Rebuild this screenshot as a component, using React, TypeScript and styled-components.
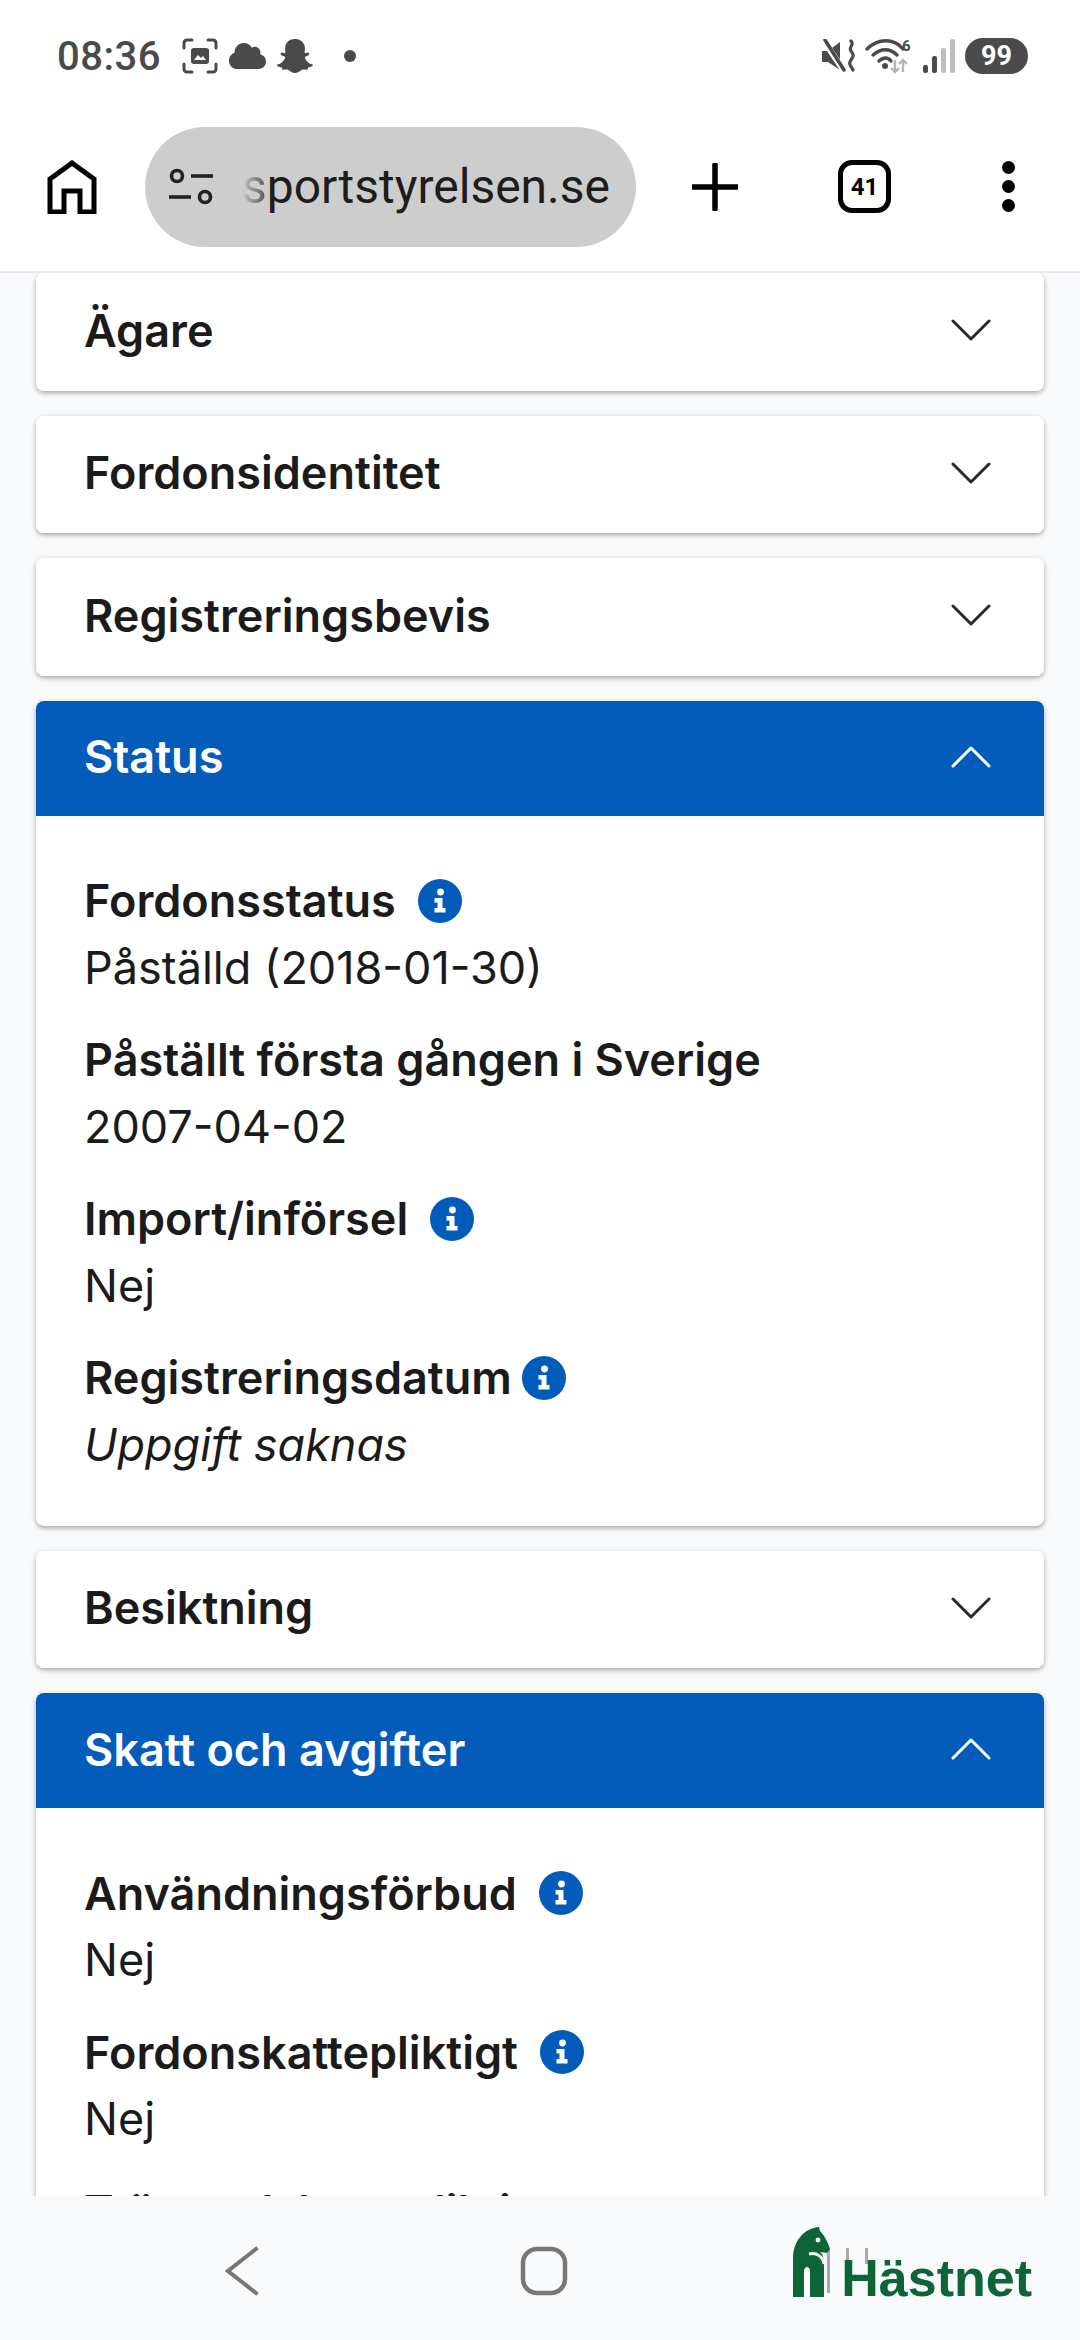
import { FaCloud, FaSnapchatGhost } from "react-icons/fa";
import styled, { createGlobalStyle } from "styled-components";

const GlobalStyle = createGlobalStyle`
    html, body {
        margin: 0;
        padding: 0;
        background: #f9fafc;
    }
    #root {
        width: 1080px;
        height: 2340px;
    }
`;

interface FieldData {
    label: string;
    value: string;
    info?: boolean;
    tight?: boolean;
    missing?: boolean;
}

const statusFields: FieldData[] = [
    { label: "Fordonsstatus", value: "Påställd (2018-01-30)", info: true },
    { label: "Påställt första gången i Sverige", value: "2007-04-02" },
    { label: "Import/införsel", value: "Nej", info: true },
    { label: "Registreringsdatum", value: "Uppgift saknas", info: true, tight: true, missing: true },
];

const taxFields: FieldData[] = [
    { label: "Användningsförbud", value: "Nej", info: true },
    { label: "Fordonskattepliktigt", value: "Nej", info: true },
    { label: "Trängselskattepliktigt", value: "Nej" },
];

const Chevron = ({ up }: { up?: boolean }) => (
    <svg width="40" height="22" viewBox="0 0 40 22" fill="none">
        <path
            d={up ? "M2 20 L20 2 L38 20" : "M2 2 L20 20 L38 2"}
            stroke="currentColor"
            strokeWidth="3"
            strokeLinecap="round"
            strokeLinejoin="round"
        />
    </svg>
);

const InfoIcon = () => (
    <svg width="44" height="44" viewBox="0 0 44 44">
        <circle cx="22" cy="22" r="22" fill="#035cba" />
        <circle cx="22.5" cy="13" r="3.4" fill="#fff" />
        <path d="M16.5 19h8v10h3v4.5h-11V29h3v-5.5h-3z" fill="#fff" />
    </svg>
);

const Section = ({ title, fields }: { title: string; fields?: FieldData[] }) => (
    <Card>
        <CardHeader $open={!!fields}>
            <CardTitle>{title}</CardTitle>
            <Chevron up={!!fields} />
        </CardHeader>
        {fields && (
            <CardBody>
                {fields.map((field) => (
                    <Field key={field.label}>
                        <FieldLabel>
                            {field.label}
                            {field.info && (
                                <InfoSlot $tight={field.tight}>
                                    <InfoIcon />
                                </InfoSlot>
                            )}
                        </FieldLabel>
                        <FieldValue $missing={field.missing}>{field.value}</FieldValue>
                    </Field>
                ))}
            </CardBody>
        )}
    </Card>
);

const App = () => (
    <Screen>
        <GlobalStyle />
        <TopArea>
            <StatusBar>
                <StatusGroup>
                    <Clock>08:36</Clock>
                    <svg width="36" height="36" viewBox="0 0 36 36" fill="none">
                        <path
                            d="M2 10V5a3 3 0 0 1 3-3h5M26 2h5a3 3 0 0 1 3 3v5M34 26v5a3 3 0 0 1-3 3h-5M10 34H5a3 3 0 0 1-3-3v-5"
                            stroke="#4a4a4a"
                            strokeWidth="3"
                            strokeLinecap="round"
                        />
                        <rect x="9" y="10" width="18" height="16" rx="3" fill="#4a4a4a" />
                        <path d="M12 22l4-5 3 3 2-2 3 4z" fill="#fff" />
                    </svg>
                    <CloudIcon />
                    <GhostIcon />
                    <StatusDot />
                </StatusGroup>
                <StatusGroup $right>
                    <svg width="33" height="34" viewBox="0 0 33 34" fill="none">
                        <path d="M0 12h6l12-9v28L6 23H0z" fill="#4a4a4a" />
                        <path d="M2 2l20 30" stroke="#fff" strokeWidth="6" />
                        <path d="M3 1l19 30" stroke="#4a4a4a" strokeWidth="3.5" strokeLinecap="round" />
                        <path
                            d="M29 2c4 4-3 6 0 10s3 5 0 9 0 6 2 10"
                            stroke="#4a4a4a"
                            strokeWidth="3.2"
                            strokeLinecap="round"
                        />
                    </svg>
                    <svg width="48" height="36" viewBox="0 0 48 36" fill="none">
                        <path d="M2 11c11-11 27-11 36 0" stroke="#4a4a4a" strokeWidth="3.4" strokeLinecap="round" />
                        <path d="M8 17c8-7 17-7 24 0" stroke="#4a4a4a" strokeWidth="3.4" strokeLinecap="round" />
                        <path d="M14 23c4-4 9-4 12 0" stroke="#4a4a4a" strokeWidth="3.4" strokeLinecap="round" />
                        <circle cx="20" cy="28" r="3" fill="#4a4a4a" />
                        <path d="M30 22v12M26 30l4 4 4-4M38 34V22M34 26l4-4 4 4" stroke="#b5b5b5" strokeWidth="2.4" />
                        <text x="37" y="13" fontSize="15" fontWeight="700" fill="#4a4a4a" fontFamily="Roboto, sans-serif">
                            6
                        </text>
                    </svg>
                    <svg width="32" height="34" viewBox="0 0 32 34">
                        <rect x="0" y="26" width="5" height="8" rx="2" fill="#4a4a4a" />
                        <rect x="9" y="17" width="5" height="17" rx="2" fill="#4a4a4a" />
                        <rect x="18" y="9" width="5" height="25" rx="2" fill="#bdbdbd" />
                        <rect x="27" y="0" width="5" height="34" rx="2" fill="#bdbdbd" />
                    </svg>
                    <Battery>99</Battery>
                </StatusGroup>
            </StatusBar>
            <Toolbar>
                <svg width="50" height="54" viewBox="0 0 50 54" fill="none">
                    <path
                        d="M3 52V19L25 3l22 16v33H33V31H17v21z"
                        stroke="#000"
                        strokeWidth="5"
                        strokeLinejoin="miter"
                    />
                </svg>
                <UrlPill>
                    <svg width="44" height="38" viewBox="0 0 44 38" fill="none">
                        <circle cx="8" cy="8" r="5.5" stroke="#222" strokeWidth="3.6" />
                        <path d="M22 8h22" stroke="#222" strokeWidth="3.6" />
                        <path d="M0 29h22" stroke="#222" strokeWidth="3.6" />
                        <circle cx="36" cy="29" r="5.5" stroke="#222" strokeWidth="3.6" />
                    </svg>
                    <UrlText>
                        <FadedLetter>s</FadedLetter>portstyrelsen.se
                    </UrlText>
                </UrlPill>
                <PlusButton>
                    <svg width="46" height="48" viewBox="0 0 46 48">
                        <path d="M23 2v44M1 24h44" stroke="#000" strokeWidth="5.5" strokeLinecap="round" />
                    </svg>
                </PlusButton>
                <TabCount>41</TabCount>
                <MenuDots>
                    <span />
                    <span />
                    <span />
                </MenuDots>
            </Toolbar>
        </TopArea>
        <Main>
            <Section title="Ägare" />
            <Section title="Fordonsidentitet" />
            <Section title="Registreringsbevis" />
            <Section title="Status" fields={statusFields} />
            <Section title="Besiktning" />
            <Section title="Skatt och avgifter" fields={taxFields} />
        </Main>
        <NavBar>
            <BackIcon width="34" height="50" viewBox="0 0 34 50" fill="none">
                <path d="M31 3L3 25l28 22" stroke="#777" strokeWidth="4" strokeLinecap="square" />
            </BackIcon>
            <HomeIcon width="48" height="50" viewBox="0 0 48 50" fill="none">
                <rect x="3" y="3" width="42" height="44" rx="14" stroke="#777" strokeWidth="4.5" />
            </HomeIcon>
            <Logo>
                <HorseMark>
                    <svg width="76" height="70" viewBox="0 0 76 70">
                        <rect x="34" y="21" width="3" height="45" fill="#a8a8a8" />
                        <rect x="53" y="21" width="3" height="16" fill="#a8a8a8" />
                        <rect x="72" y="21" width="3" height="16" fill="#a8a8a8" />
                        <path
                            d="M0 70V32C0 13 12 1 26 0l1 4c4 4 8 11 10 18l-3 4-7-1c2 1 4 5 4 11v34H17V44c0-3-2-4-3-4s-3 1-3 4v26z"
                            fill="#0d6537"
                        />
                        <path d="M16 27c8-2 14 3 15 10" stroke="#f9fafc" strokeWidth="3" fill="none" />
                        <circle cx="25" cy="13" r="2.4" fill="#f9fafc" />
                    </svg>
                </HorseMark>
                <LogoText>Hästnet</LogoText>
            </Logo>
        </NavBar>
    </Screen>
);

export default App;

const Screen = styled.div`
    width: 1080px;
    height: 2340px;
    display: flex;
    flex-direction: column;
    overflow: hidden;
    background: #f9fafc;
    font-family: Inter, "Noto Sans", sans-serif;
`;

const TopArea = styled.header`
    height: 273px;
    flex-shrink: 0;
    display: flex;
    flex-direction: column;
    background: #fff;
    border-bottom: 2px solid #e8e8ea;
    box-sizing: border-box;
`;

const StatusBar = styled.div`
    height: 102px;
    padding: 10px 52px 0 57px;
    box-sizing: border-box;
    display: flex;
    align-items: center;
    justify-content: space-between;
`;

const StatusGroup = styled.div<{ $right?: boolean }>`
    display: flex;
    align-items: center;
    gap: ${({ $right }) => ($right ? "10px" : "11px")};
`;

const Clock = styled.span`
    width: 114px;
    font-family: Roboto, sans-serif;
    font-size: 40px;
    font-weight: 500;
    color: #4a4a4a;
    letter-spacing: 0.5px;
`;

const CloudIcon = styled(FaCloud)`
    width: 37px;
    height: 30px;
    color: #4a4a4a;
`;

const GhostIcon = styled(FaSnapchatGhost)`
    width: 36px;
    height: 36px;
    color: #4a4a4a;
`;

const StatusDot = styled.span`
    width: 12px;
    height: 12px;
    margin-left: 20px;
    border-radius: 50%;
    background: #4a4a4a;
`;

const Battery = styled.span`
    width: 63px;
    height: 36px;
    border-radius: 18px;
    background: #4a4a4a;
    color: #fff;
    font-family: Roboto, sans-serif;
    font-size: 27px;
    font-weight: 700;
    display: flex;
    align-items: center;
    justify-content: center;
`;

const Toolbar = styled.div`
    height: 169px;
    padding-left: 47px;
    display: flex;
    align-items: center;
`;

const UrlPill = styled.div`
    width: 491px;
    height: 120px;
    margin-left: 48px;
    padding-left: 24px;
    box-sizing: border-box;
    border-radius: 60px;
    background: #cdcdcd;
    display: flex;
    align-items: center;
    gap: 29px;
`;

const UrlText = styled.span`
    font-family: Roboto, sans-serif;
    font-size: 48px;
    color: #1d1d1d;
`;

const FadedLetter = styled.span`
    background: linear-gradient(90deg, #c4c4c4, #555);
    -webkit-background-clip: text;
    background-clip: text;
    color: transparent;
`;

const PlusButton = styled.div`
    margin-left: 56px;
    display: flex;
`;

const TabCount = styled.div`
    width: 53px;
    height: 53px;
    margin-left: 100px;
    box-sizing: border-box;
    border: 5px solid #000;
    border-radius: 14px;
    display: flex;
    align-items: center;
    justify-content: center;
    font-family: Roboto, sans-serif;
    font-size: 24px;
    font-weight: 700;
    color: #000;
`;

const MenuDots = styled.div`
    margin-left: 111px;
    display: flex;
    flex-direction: column;
    gap: 6px;

    span {
        width: 13px;
        height: 13px;
        border-radius: 50%;
        background: #000;
    }
`;

const Main = styled.main`
    flex: 1;
    min-height: 0;
    padding: 0 36px;
    overflow: hidden;
    display: flex;
    flex-direction: column;
    gap: 25px;
`;

const Card = styled.section`
    flex-shrink: 0;
    background: #fff;
    border-radius: 8px;
    box-shadow: 0 2px 5px rgba(0, 0, 0, 0.35);
    overflow: hidden;
`;

const CardHeader = styled.div<{ $open: boolean }>`
    height: ${({ $open }) => ($open ? "115px" : "117.5px")};
    padding: 0 53px 3px 48px;
    box-sizing: border-box;
    display: flex;
    align-items: center;
    justify-content: space-between;
    background: ${({ $open }) => ($open ? "#035cba" : "#fff")};
    color: ${({ $open }) => ($open ? "#fff" : "#1b1b1b")};

    svg {
        color: ${({ $open }) => ($open ? "#fff" : "#2a2a2a")};
    }
`;

const CardTitle = styled.h2`
    margin: 0;
    font-size: 45px;
    font-weight: 600;
`;

const CardBody = styled.div`
    padding: 55px 48px 51px;
    display: flex;
    flex-direction: column;
    gap: 32px;
`;

const Field = styled.div`
    display: flex;
    flex-direction: column;
    gap: 7px;
`;

const FieldLabel = styled.div`
    height: 60px;
    display: flex;
    align-items: center;
    font-size: 45px;
    font-weight: 600;
    color: #1b1b1b;
`;

const InfoSlot = styled.span<{ $tight?: boolean }>`
    margin-left: ${({ $tight }) => ($tight ? "10px" : "22px")};
    display: flex;
`;

const FieldValue = styled.div<{ $missing?: boolean }>`
    height: 60px;
    line-height: 60px;
    font-size: 45px;
    font-style: ${({ $missing }) => ($missing ? "italic" : "normal")};
    color: #1b1b1b;
`;

const NavBar = styled.nav`
    height: 144px;
    flex-shrink: 0;
    position: relative;
    padding: 6px 48px 0 225px;
    box-sizing: border-box;
    background: #f9fafc;
    display: flex;
    align-items: center;
    z-index: 1;
`;

const BackIcon = styled.svg`
    flex-shrink: 0;
`;

const HomeIcon = styled.svg`
    flex-shrink: 0;
    margin-left: 261px;
`;

const Logo = styled.div`
    margin-left: auto;
    margin-bottom: 18px;
    display: flex;
    align-items: flex-end;
`;

const HorseMark = styled.div`
    display: flex;
    margin-right: -28px;
`;

const LogoText = styled.span`
    position: relative;
    font-family: "Liberation Sans", Arial, sans-serif;
    font-size: 52px;
    line-height: 38px;
    font-weight: 700;
    color: #0d6537;
`;
